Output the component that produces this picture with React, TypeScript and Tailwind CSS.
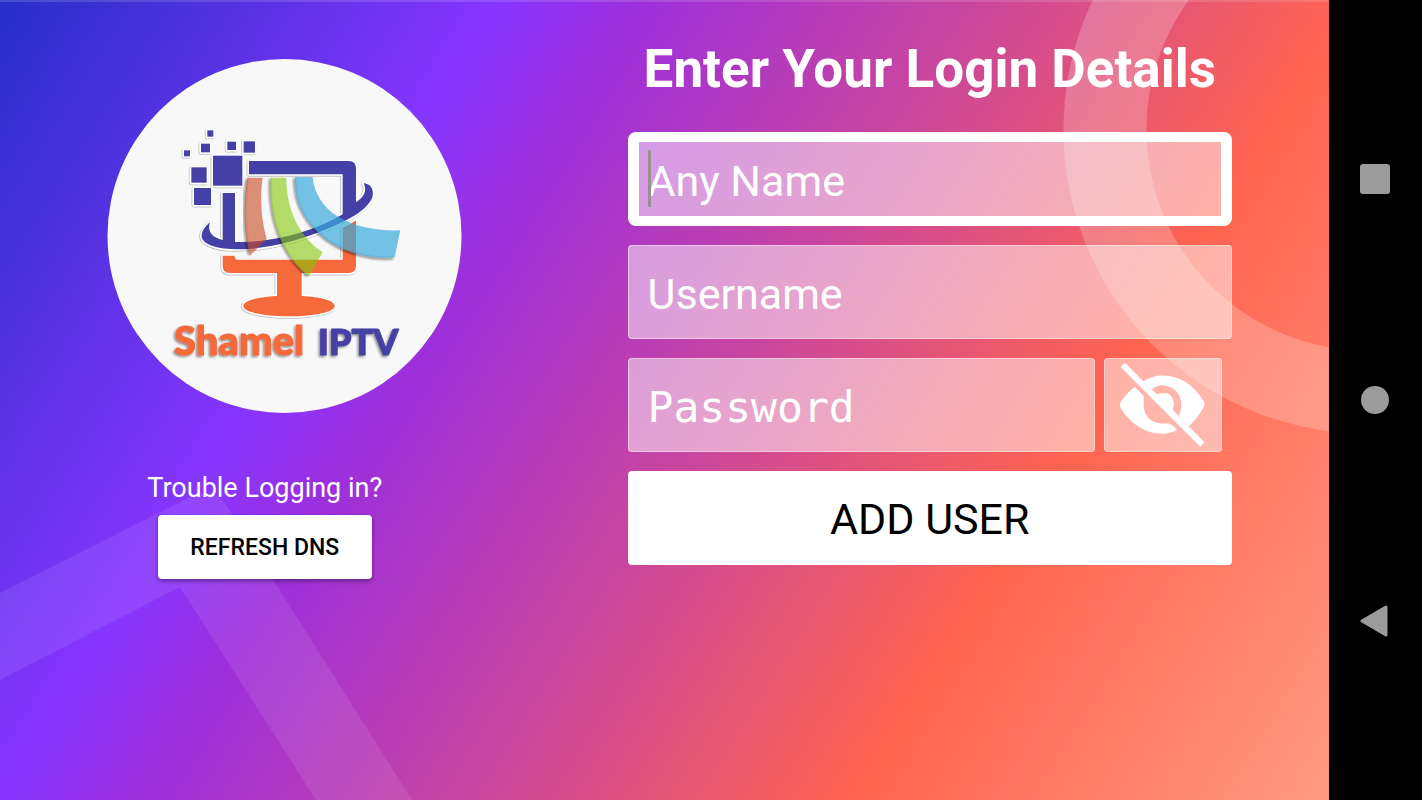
import React from "react";

const fieldClass =
  "w-full h-[94px] rounded border border-white/40 bg-white/50 pt-[3px] pl-[19px] pr-4 text-[43px] text-white placeholder:text-white placeholder:opacity-100 outline-none";

function Backdrop() {
  return (
    <svg
      className="absolute inset-0 h-full w-full"
      viewBox="0 0 1329 800"
      preserveAspectRatio="none"
      aria-hidden="true"
    >
      <path d="M0 593 L190 497 Q214 485 228 508 L412 800 H316 L180 587 L0 680 Z" fill="#fff" fillOpacity="0.09" />
      <circle cx="1367" cy="130" r="262" fill="none" stroke="#fff" strokeOpacity="0.22" strokeWidth="83" />
      <rect width="1329" height="2" fill="#fff" fillOpacity="0.14" />
    </svg>
  );
}

const ribbons = [
  {
    shape: "M262 188H308C300 240 302 310 320 372L270 422C250 350 250 260 262 188Z",
    edge: "M260 192C249 262 250 346 267 420",
    fill: "#ca4921",
    opacity: 0.6,
  },
  {
    shape: "M332 188H379C378 270 410 360 488 412L447 484C360 420 325 300 332 188Z",
    edge: "M330 192C324 300 358 418 443 484",
    fill: "#84c80a",
    opacity: 0.6,
  },
  {
    shape: "M405 186H458C468 290 570 350 721 346L704 427C560 440 400 350 405 186Z",
    edge: "M403 190C399 350 560 442 700 430",
    fill: "#3aabdd",
    opacity: 0.7,
  },
];

function Logo() {
  return (
    <svg className="h-[355px] w-[355px]" viewBox="0 0 355 355" role="img" aria-label="Shamel IPTV">
      <defs>
        <filter id="lift" x="-20%" y="-20%" width="140%" height="140%">
          <feDropShadow dx="-1.5" dy="1.5" stdDeviation="1.2" floodColor="#000" floodOpacity="0.45" />
        </filter>
        <filter id="soft" x="-20%" y="-20%" width="140%" height="140%">
          <feGaussianBlur stdDeviation="3" />
        </filter>
      </defs>
      <circle cx="177.5" cy="178" r="177" fill="#f8f8f8" />
      <g transform="translate(53 57) scale(0.33333)">
        <g filter="url(#lift)" stroke="#fff" strokeWidth="9" paintOrder="stroke" strokeLinejoin="round">
          <g fill="#4540a5">
            <rect x="142" y="46" width="18" height="19" />
            <rect x="123" y="86" width="27" height="26" />
            <rect x="72" y="106" width="18" height="18" />
            <rect x="202" y="80" width="26" height="25" />
            <rect x="251" y="79" width="34" height="34" />
            <rect x="94" y="157" width="46" height="46" />
            <rect x="102" y="219" width="51" height="51" />
            <rect x="159" y="122" width="88" height="90" />
            <path d="M188 234H225V381C340 384 460 350 548 298V178H267V138H566Q588 138 588 160V262C612 246 622 228 611 205C634 206 645 228 635 252C615 290 560 318 500 342C420 376 320 404 225 403C160 402 122 384 125 360C127 345 138 332 150 322C142 346 152 366 188 375Z" />
          </g>
          <path
            fill="#f5693b"
            d="M188 422H223L228 434H548V338Q570 330 588 316V452Q588 474 566 474H425V543C480 546 524 556 524 573C524 592 460 604 387 604C314 604 250 592 250 573C250 557 292 546 351 543V474H210Q188 474 188 452Z"
          />
        </g>
        {ribbons.map((r) => (
          <g key={r.fill}>
            <path d={r.edge} fill="none" stroke="#000" strokeOpacity="0.5" strokeWidth="6" filter="url(#soft)" />
            <path d={r.shape} fill={r.fill} fillOpacity={r.opacity} />
          </g>
        ))}
      </g>
      <g
        className="font-[Lato,sans-serif] font-black"
        filter="url(#lift)"
        strokeWidth="1"
        strokeLinejoin="round"
      >
        <text x="67" y="297" className="text-[40px]" fill="#f5693b" stroke="#f5693b">
          Shamel
        </text>
        <text x="211" y="297" className="text-[36px]" fill="#4540a5" stroke="#4540a5">
          IPTV
        </text>
      </g>
    </svg>
  );
}

function EyeOff() {
  return (
    <svg className="h-full w-full" viewBox="46 40 348 277" fill="#fff" aria-hidden="true">
      <path d="M92 64L105 51L345 291L332 304Z" />
      <path d="M135 124L162 151V180C162 212 186 234 216 234H238Q250 238 262 253C246 262 232 265 218 265C160 265 118 228 92 187Q88 178 92 170C104 152 118 137 135 124Z" />
      <path
        fillRule="evenodd"
        d="M160 107C180 96 198 90 218 90C276 90 316 124 343 168Q348 176 343 184C330 207 315 227 297 243ZM187 131L202 146Q208 143 217 143H234Q253 152 253 180Q247 190 253 197L267 211Q275 198 275 178C275 144 250 119 217 119Q200 120 187 131Z"
      />
    </svg>
  );
}

function SystemNav() {
  const button = "flex w-full flex-1 items-center justify-center";
  return (
    <nav className="flex w-[93px] shrink-0 flex-col bg-black py-[68px] pr-[2px]" aria-label="System">
      <button type="button" aria-label="Recent apps" className={button}>
        <span className="h-[30px] w-[30px] rounded-[3px] bg-[#9b9b9b]" />
      </button>
      <button type="button" aria-label="Home" className={button}>
        <span className="h-7 w-7 rounded-full bg-[#9b9b9b]" />
      </button>
      <button type="button" aria-label="Back" className={button}>
        <svg width="30" height="34" viewBox="0 0 30 34" aria-hidden="true">
          <path d="M2 17L26 3V31Z" fill="#9b9b9b" stroke="#9b9b9b" strokeWidth="3" strokeLinejoin="round" />
        </svg>
      </button>
    </nav>
  );
}

export default function App() {
  return (
    <div className="flex min-h-screen font-[Roboto,sans-serif]">
      <main className="relative grid flex-1 grid-cols-[3fr_4fr] bg-[linear-gradient(122deg,#262fc8_0%,#8735ff_27.5%,#9d2fdc_35%,#cb479b_54%,#ff6450_74%,#ff9a82_100%)]">
        <Backdrop />
        <section className="relative flex flex-col items-center pt-[58px]">
          <Logo />
          <div className="mt-[59px] flex flex-col items-center pr-10">
            <p className="text-[27px] leading-8 text-white">Trouble Logging in?</p>
            <button
              type="button"
              className="mt-[11px] h-16 w-[214px] rounded bg-white pt-[3px] text-[23px] font-medium text-black shadow-[0_2px_4px_rgba(0,0,0,0.4)]"
            >
              REFRESH DNS
            </button>
          </div>
        </section>
        <section className="relative pt-[37px] pr-[97px] pl-[58px]">
          <h1 className="text-center text-[53px] leading-[64px] font-bold text-white">
            Enter Your Login Details
          </h1>
          <form className="mt-[31px] flex flex-col gap-[19px]" onSubmit={(e) => e.preventDefault()}>
            <div className="relative">
              <input
                type="text"
                aria-label="Any Name"
                placeholder="Any Name"
                className="h-[94px] w-full rounded-lg border-x-[11px] border-y-[10px] border-white bg-white/50 bg-clip-padding pt-[3px] pr-4 pl-[9px] text-[43px] text-white outline-none placeholder:text-white placeholder:opacity-100"
              />
              <span className="absolute top-[18px] left-5 h-[57px] w-[3px] bg-[#96908e]" />
            </div>
            <input type="text" aria-label="Username" placeholder="Username" className={fieldClass} />
            <div className="flex gap-[9px] pr-[10px]">
              <input
                type="password"
                aria-label="Password"
                placeholder="Password"
                className={`${fieldClass} min-w-0 flex-1 font-['DejaVu_Sans_Mono',monospace]`}
              />
              <button
                type="button"
                aria-label="Show password"
                className="h-[94px] w-[118px] shrink-0 rounded border border-white/40 bg-white/50"
              >
                <EyeOff />
              </button>
            </div>
            <button type="submit" className="h-[94px] w-full rounded bg-white pt-[3px] text-[43px] text-black">
              ADD USER
            </button>
          </form>
        </section>
      </main>
      <SystemNav />
    </div>
  );
}
